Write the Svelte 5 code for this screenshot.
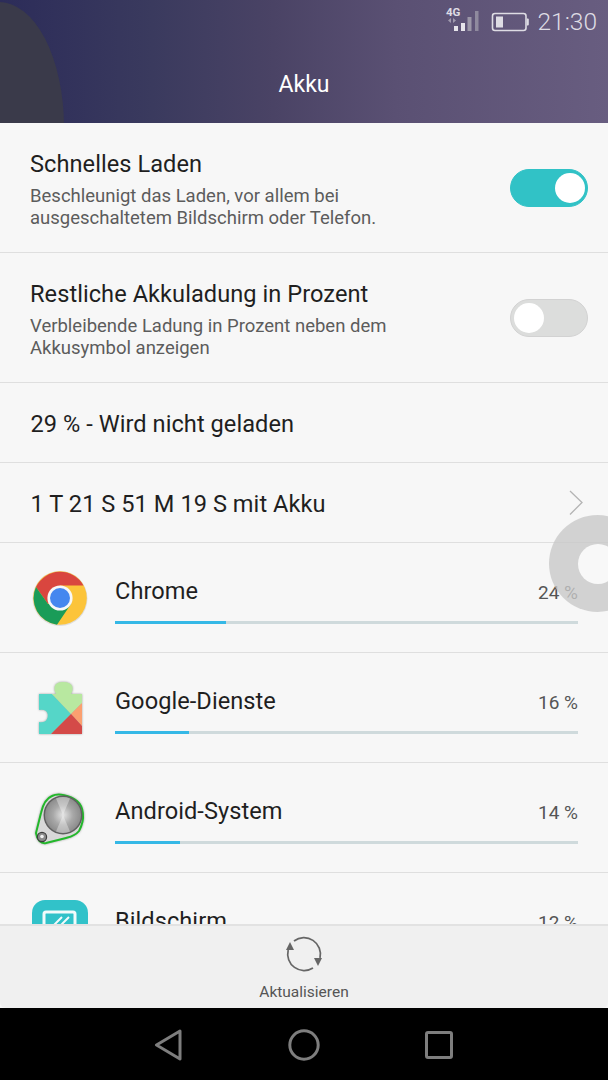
<script>
  const apps = [
    { name: "Chrome", pct: 24, bar: 111, icon: "chrome" },
    { name: "Google-Dienste", pct: 16, bar: 74, icon: "play" },
    { name: "Android-System", pct: 14, bar: 65, icon: "android" },
    { name: "Bildschirm", pct: 12, bar: 56, icon: "screen" },
  ];
</script>

<div class="phone">
  <header class="top">
    <div class="blob"></div>
    <div class="status">
      <svg class="signal" width="37" height="27" viewBox="0 0 37 27">
        <text x="2" y="9.5" class="net">4G</text>
        <path d="M7 12 L4 14.5 7 17z M9 12 L12 14.5 9 17z" fill="#a09aae" />
        <rect x="10" y="20" width="4" height="5" fill="#e6e4ea" />
        <rect x="17" y="17" width="4" height="8" fill="#e6e4ea" />
        <rect x="23.5" y="11" width="4" height="14" fill="#9c97a8" />
        <rect x="31" y="5" width="3.5" height="20" fill="#8f8a9e" />
      </svg>
      <svg class="battery" width="39" height="20" viewBox="0 0 39 20">
        <rect x="1.5" y="1.5" width="33.5" height="17" rx="2.5" fill="none" stroke="#dedce4" stroke-width="1.6" />
        <rect x="5" y="4.5" width="7" height="11" fill="#dedce4" />
        <path d="M35.8 6.5 h1 a1 1 0 0 1 1 1 v5 a1 1 0 0 1 -1 1 h-1z" fill="#dedce4" />
      </svg>
      <span class="clock">21:30</span>
    </div>
    <h1>Akku</h1>
  </header>

  <main class="list">
    <section class="row setting">
      <div class="text">
        <div class="title">Schnelles Laden</div>
        <div class="sub">Beschleunigt das Laden, vor allem bei<br />ausgeschaltetem Bildschirm oder Telefon.</div>
      </div>
      <div class="switch on"><span></span></div>
    </section>

    <section class="row setting">
      <div class="text">
        <div class="title">Restliche Akkuladung in Prozent</div>
        <div class="sub">Verbleibende Ladung in Prozent neben dem<br />Akkusymbol anzeigen</div>
      </div>
      <div class="switch"><span></span></div>
    </section>

    <section class="row plain">
      <div class="title">29 % - Wird nicht geladen</div>
    </section>

    <section class="row plain">
      <div class="title">1 T 21 S 51 M 19 S mit Akku</div>
      <svg class="chev" width="16" height="26" viewBox="0 0 16 26">
        <path d="M2 1 L14 12.5 L2 24.5" fill="none" stroke="#b4b4b4" stroke-width="1.3" />
      </svg>
    </section>

    {#each apps as app (app.name)}
      <section class="row app">
        <div class="icon">
          {#if app.icon == "chrome"}
            <svg width="56" height="56" viewBox="0 0 56 56">
              <circle cx="28" cy="28.5" r="27.5" fill="#dedede" />
              <circle cx="28" cy="28" r="26.8" fill="#fcc43a" />
              <path d="M4 17 A26.8 26.8 0 0 1 51.5 15.5 L28 15.5 L16 34z" fill="#d9463f" />
              <path d="M4 17 A26.8 26.8 0 0 0 25 54.7 L39 34 L16 34z" fill="#1a9c58" />
              <circle cx="28" cy="28" r="12.6" fill="#f7f7f7" />
              <circle cx="28" cy="28" r="10" fill="#4587ef" />
            </svg>
          {:else if app.icon == "play"}
            <svg class="soft" width="56" height="56" viewBox="0 0 56 56">
              <path d="M7 14 H20 L39 34 L19 54 H7 V42 q6 1 8 -3 q2 -5 -1 -8 q-3 -2 -7 -1z" fill="#55d6c8" />
              <path d="M20 14 H24 q-2 -3 -1.500 -7 q1 -5 8.500 -5 q8 0 9.500 5 q0.500 4 -1.500 7 H50 V23 L39 34z" fill="#b8e8a0" />
              <path d="M50 23 V46 L39 34z" fill="#fba070" />
              <path d="M39 34 L50 46 V54 H19z" fill="#d44a48" />
            </svg>
          {:else if app.icon == "android"}
            <svg class="soft" width="56" height="56" viewBox="0 0 56 56">
              <defs>
                <radialGradient id="metal" cx="50%" cy="50%" r="50%">
                  <stop offset="0" stop-color="#e4e4e4" />
                  <stop offset="0.55" stop-color="#a8a8a8" />
                  <stop offset="1" stop-color="#8c8c8c" />
                </radialGradient>
              </defs>
              <path d="M9 23 C11 14 15 8 20 6 C26 3 38 5 45 11 C51 16 54 28 47 41 C43 46 38 47 34 48 L14 53 C9 54 5 50 4 43z" fill="#d8d8d8" stroke="#22b82a" stroke-width="2" />
              <circle cx="31" cy="25" r="19.5" fill="#5f5f5f" />
              <circle cx="31" cy="25" r="18" fill="url(#metal)" />
              <path d="M31 25 L24 8.500 A18 18 0 0 1 38 8.500z M31 25 L24 41.500 A18 18 0 0 0 38 41.500z" fill="#fff" opacity="0.35" />
              <circle cx="10" cy="47" r="4.6" fill="#8a8a8a" stroke="#3d3d3d" stroke-width="1.2" />
              <circle cx="10" cy="46.5" r="1.8" fill="#f0f0f0" />
            </svg>
          {:else}
            <svg width="56" height="56" viewBox="0 0 56 56">
              <rect x="0" y="0" width="56" height="56" rx="13" fill="#31c2c9" />
              <rect x="12" y="12" width="31" height="27" rx="2" fill="none" stroke="#f2fbfb" stroke-width="3" />
              <path d="M21 26 l9 -9 M28 26 l9 -9" stroke="#f2fbfb" stroke-width="2" />
            </svg>
          {/if}
        </div>
        <div class="detail">
          <div class="line">
            <span class="title">{app.name}</span>
            <span class="pct">{app.pct} %</span>
          </div>
          <div class="track"><div class="fill" style="width:{app.bar}px"></div></div>
        </div>
      </section>
    {/each}
  </main>

  <div class="float"><span></span></div>

  <footer class="action">
    <svg width="38" height="38" viewBox="0 0 38 38">
      <path d="M9 6 A16.5 16.5 0 0 1 35 23" fill="none" stroke="#666" stroke-width="1.7" />
      <path d="M3.2 15 A16.5 16.5 0 0 0 28 33" fill="none" stroke="#666" stroke-width="1.7" />
      <path d="M5 7 L1 15 L9 15z" fill="#666" />
      <path d="M33 31 L29 23 L37 23z" fill="#666" />
    </svg>
    <span>Aktualisieren</span>
  </footer>

  <nav class="softkeys">
    <svg width="30" height="32" viewBox="0 0 30 32">
      <path d="M26 2 L2.5 16 L26 30z" fill="none" stroke="#7e7e7e" stroke-width="3" stroke-linejoin="round" />
    </svg>
    <svg width="32" height="32" viewBox="0 0 32 32">
      <circle cx="16" cy="16" r="14.2" fill="none" stroke="#7e7e7e" stroke-width="3" />
    </svg>
    <svg width="30" height="30" viewBox="0 0 30 30">
      <rect x="2.5" y="2.5" width="25" height="25" rx="1.5" fill="none" stroke="#7e7e7e" stroke-width="3" />
    </svg>
  </nav>
</div>

<style>
  :global(body) {
    margin: 0;
    background: #000;
  }

  .phone {
    position: relative;
    display: flex;
    flex-direction: column;
    width: 608px;
    height: 1080px;
    overflow: hidden;
    background: #f7f7f7;
    font-family: Roboto, "Liberation Sans", sans-serif;
    color: #1f1f1f;
  }

  /* header */
  .top {
    position: relative;
    flex: none;
    height: 123px;
    overflow: hidden;
    background: linear-gradient(90deg, #2c2c59 0%, #3a3a5e 25%, #4a4365 45%, #5a5073 65%, #685d80 100%);
  }

  .blob {
    position: absolute;
    left: -66px;
    top: 2px;
    width: 130px;
    height: 250px;
    border-radius: 50%;
    background: #3a3a4a;
  }

  .status {
    position: relative;
    display: flex;
    justify-content: flex-end;
    align-items: center;
    gap: 11px;
    height: 38px;
    padding: 2px 11px 0 0;
    color: #dedce4;
  }

  .net {
    font: 700 11.5px Roboto, sans-serif;
    fill: #dedce4;
  }

  .signal {
    margin-right: -1px;
    margin-top: -3px;
  }

  .battery {
    margin-top: 2px;
  }

  .clock {
    font-size: 24.5px;
    font-weight: 300;
    margin-left: -4px;
  }

  h1 {
    position: relative;
    margin: 0;
    padding-top: 28px;
    text-align: center;
    font-size: 23px;
    font-weight: 400;
    line-height: 34px;
    color: #fff;
  }

  /* list */
  .list {
    flex: 1;
    min-height: 0;
    overflow: hidden;
  }

  .row {
    display: flex;
    align-items: center;
    box-sizing: border-box;
    padding: 0 20px 0 30px;
    border-bottom: 1px solid #dfdfdf;
  }

  .setting {
    height: 130px;
    justify-content: space-between;
  }

  .plain {
    height: 80px;
    justify-content: space-between;
  }

  .plain .title {
    padding-top: 2px;
    padding-left: 0.5px;
  }

  .app {
    align-items: flex-start;
    height: 110px;
    padding: 33px 30px 0;
    gap: 25px;
  }

  .title {
    font-size: 23.6px;
    letter-spacing: 0.05px;
    line-height: 30px;
    color: #1f1f1f;
  }

  .sub {
    margin-top: 6px;
    font-size: 18.5px;
    line-height: 22px;
    color: #5c5c5c;
  }

  .setting .text {
    margin-top: 3px;
  }

  .chev {
    margin-right: 4px;
  }

  /* switches */
  .switch {
    box-sizing: border-box;
    display: flex;
    align-items: center;
    width: 78px;
    height: 38px;
    padding: 0 3px;
    border-radius: 19px;
    background: #dcdddc;
    border: 1px solid #d2d2d2;
  }

  .switch span {
    width: 30px;
    height: 30px;
    border-radius: 50%;
    background: #fff;
  }

  .switch.on {
    justify-content: flex-end;
    background: #31c2c6;
    border-color: #31c2c6;
    padding: 0 2px;
  }

  /* app rows */
  .icon {
    flex: none;
    width: 60px;
    display: flex;
    justify-content: center;
    margin-top: -6px;
  }

  .soft {
    filter: drop-shadow(0 0 1px rgba(0, 0, 0, 0.35));
  }

  .detail {
    flex: 1;
    min-width: 0;
  }

  .line {
    display: flex;
    justify-content: space-between;
    align-items: baseline;
  }

  .pct {
    font-size: 19px;
    color: #555;
  }

  .track {
    margin-top: 15px;
    height: 3px;
    background: #cfdadc;
  }

  .fill {
    height: 100%;
    background: #35b8e6;
  }

  /* floating button */
  .float {
    position: absolute;
    left: 549px;
    top: 515px;
    display: flex;
    align-items: center;
    justify-content: center;
    width: 97px;
    height: 97px;
    border-radius: 50%;
    background: rgba(200, 200, 200, 0.78);
  }

  .float span {
    width: 40px;
    height: 40px;
    border-radius: 50%;
    background: #f8f8f8;
  }

  /* bottom */
  .action {
    flex: none;
    height: 84px;
    box-sizing: border-box;
    display: flex;
    flex-direction: column;
    align-items: center;
    padding-top: 9px;
    gap: 10px;
    background: #f0f0f0;
    border-top: 2px solid #e2e2e2;
    border-radius: 0 0 6px 6px;
    font-size: 15.5px;
    line-height: 18px;
    color: #555;
  }

  .softkeys {
    flex: none;
    height: 72px;
    box-sizing: border-box;
    padding-top: 2px;
    display: flex;
    justify-content: center;
    align-items: center;
    gap: 104px;
    background: #000;
  }
</style>
